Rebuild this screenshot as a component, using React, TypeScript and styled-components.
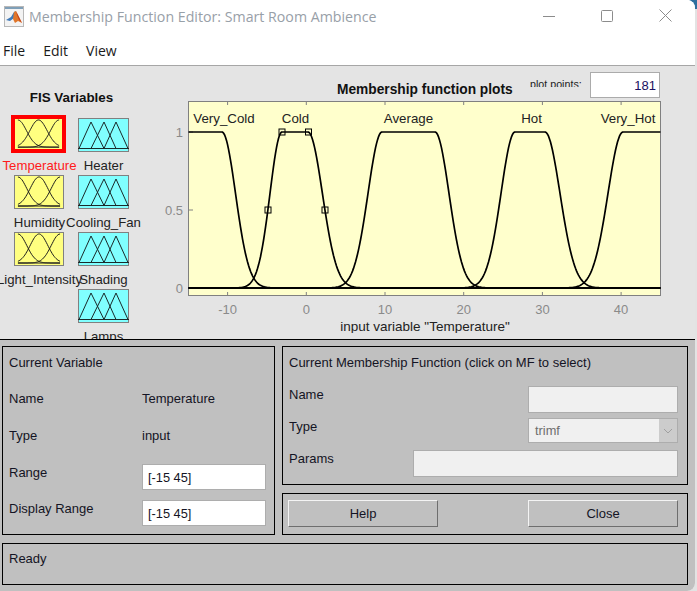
import React from "react";
import styled, { createGlobalStyle } from "styled-components";

const Global = createGlobalStyle`
  html, body { margin: 0; padding: 0; background: #e3e3e3; overflow: hidden; }
  #root { width: 697px; height: 591px; position: relative; }
  * { box-sizing: border-box; }
`;

const Sans = `"Liberation Sans", Arial, sans-serif`;
const UI = `"Open Sans", "Noto Sans", sans-serif`;

const Page = styled.div`
  width: 697px;
  height: 591px;
  position: relative;
  font-family: ${Sans};
`;
const CornerPeek = styled.div`
  position: absolute;
  top: 0;
  right: 0;
  width: 8px;
  height: 9px;
  background: #2f6f9f;
`;
const Win = styled.div`
  position: relative;
  width: 695px;
  height: 591px;
  display: flex;
  flex-direction: column;
  border-top-right-radius: 8px;
  border-bottom-right-radius: 8px;
  overflow: hidden;
  background: #fff;
`;
const TitleBar = styled.div`
  height: 33px;
  display: flex;
  align-items: center;
  background: #fff;
  padding-left: 4px;
  flex: none;
`;
const TitleText = styled.div`
  font-family: ${UI};
  font-size: 14.2px;
  color: #98a0a8;
  margin-left: 5px;
  white-space: nowrap;
  flex: 1;
`;
const WinButton = styled.div`
  width: 58.5px;
  height: 33px;
  display: flex;
  align-items: center;
  justify-content: center;
  margin-top: -2px;
`;
const MenuBar = styled.div`
  height: 33px;
  flex: none;
  display: flex;
  align-items: center;
  gap: 18px;
  padding: 3px 0 0 3px;
  background: #fff;
  border-bottom: 1px solid #a6a6a6;
`;
const MenuItem = styled.span`
  font-family: ${UI};
  font-size: 14px;
  color: #1a1a1a;
`;
const Upper = styled.div`
  height: 273px;
  flex: none;
  display: flex;
  background: #e4e4e4;
  overflow: hidden;
`;
const VarPanel = styled.div`
  width: 160px;
  flex: none;
  padding-top: 24px;
`;
const VarHeading = styled.div`
  font-size: 13.4px;
  line-height: 16px;
  font-weight: 700;
  color: #111;
  text-align: center;
  width: 143px;
`;
const VarGrid = styled.div`
  margin-top: 12px;
  padding-left: 14px;
  display: grid;
  grid-template-columns: 51px 51px;
  column-gap: 13px;
  row-gap: 2px;
`;
const VarCell = styled.div`
  width: 51px;
  display: flex;
  flex-direction: column;
  align-items: center;
`;
const Tile = styled.div<{ $kind: "in" | "out"; $selected?: boolean }>`
  width: ${(p) => (p.$selected ? 49 : p.$kind === "in" ? 50 : 51)}px;
  height: ${(p) => (p.$selected ? 32 : 34)}px;
  margin-bottom: ${(p) => (p.$selected ? 2 : 0)}px;
  flex: none;
  align-self: flex-start;
  background: ${(p) => (p.$kind === "in" ? "#ffff80" : "#80ffff")};
  border: 1px solid ${(p) => (p.$selected ? "#ff0000" : "#808080")};
  box-shadow: ${(p) => (p.$selected ? "0 0 0 3px #ff0000" : "none")};
  svg { display: block; width: 100%; height: 100%; overflow: visible; }
`;
const VarLabel = styled.div<{ $selected?: boolean }>`
  margin-top: 7px;
  font-size: 13.2px;
  line-height: 14px;
  white-space: nowrap;
  color: ${(p) => (p.$selected ? "#ff1a1a" : "#222")};
`;
const PlotColumn = styled.div`
  flex: 1;
  padding-top: 6px;
  min-width: 0;
`;
const PlotHeader = styled.div`
  height: 26px;
  display: flex;
  align-items: flex-end;
`;
const PlotTitle = styled.div`
  margin-left: 177px;
  font-size: 13.75px;
  line-height: 16px;
  font-weight: 700;
  color: #111;
  white-space: nowrap;
  width: 193px;
`;
const PointsLabel = styled.div`
  align-self: flex-start;
  margin-top: 7px;
  height: 8px;
  line-height: 11px;
  font-size: 10.7px;
  overflow: hidden;
  white-space: nowrap;
  color: #222;
  width: 60px;
`;
const PointsField = styled.div`
  width: 70px;
  height: 26px;
  background: #fff;
  border: 1px solid #ababab;
  font-size: 13px;
  line-height: 25px;
  text-align: right;
  padding-right: 3px;
  color: #1a1060;
`;
const PlotSvg = styled.svg`
  display: block;
  margin-top: 3px;
  font-family: ${Sans};
`;
const Lower = styled.div`
  flex: 1;
  background: #c0c0c0;
  border-top: 1px solid #000;
  padding: 6px 7px 7px 2px;
  display: grid;
  grid-template-columns: 273px 406px;
  grid-template-rows: 139px 42px 42px;
  column-gap: 7px;
  row-gap: 8px;
  font-size: 13px;
  color: #141424;
`;
const Group = styled.div<{ $area: string }>`
  grid-area: ${(p) => p.$area};
  border: 1px solid #000;
  min-width: 0;
`;
const VarGroup = styled(Group)`
  padding: 6px 6px;
  display: grid;
  grid-template-columns: 133px 124px;
  grid-template-rows: 27px 36px 37px 37px 36px;
`;
const Line = styled.div`
  line-height: 20px;
  padding-top: 2px;
  white-space: nowrap;
  align-self: center;
`;
const Heading = styled(Line)`
  grid-column: 1 / -1;
  align-self: start;
  padding-top: 0;
`;
const ValueField = styled.div`
  height: 26px;
  align-self: end;
  background: #fff;
  border: 1px solid #adadad;
  line-height: 26px;
  padding-left: 5px;
  font-size: 12.8px;
`;
const MfGroup = styled(Group)`
  padding: 6px 9px 0 6px;
  display: flex;
  flex-direction: column;
`;
const MfRow = styled.div<{ $h: number }>`
  display: flex;
  justify-content: space-between;
  align-items: flex-start;
  height: ${(p) => p.$h}px;
`;
const MfHeading = styled.div`
  line-height: 20px;
  white-space: nowrap;
`;
const MfLabel = styled.div`
  line-height: 20px;
  white-space: nowrap;
  margin-top: -1px;
`;
const EmptyField = styled.div<{ $w: number; $h?: number }>`
  width: ${(p) => p.$w}px;
  height: ${(p) => p.$h ?? 27}px;
  background: #f0f0f0;
  border: 1px solid #adadad;
`;
const SelectField = styled.div`
  width: 150px;
  height: 25px;
  background: #f0f0f0;
  border: 1px solid #adadad;
  display: flex;
  align-items: center;
  justify-content: space-between;
  padding-left: 6px;
  color: #6d6d6d;
  font-size: 12.8px;
`;
const SelectArrow = styled.div`
  width: 18px;
  height: 100%;
  background: #cccccc;
  display: flex;
  align-items: center;
  justify-content: center;
`;
const ButtonGroup = styled(Group)`
  padding: 6px 9px 0 5px;
  display: flex;
  justify-content: space-between;
`;
const Bevel = styled.div`
  width: 150px;
  height: 27px;
  background: #c0c0c0;
  border-top: 1px solid #f4f4f4;
  border-left: 1px solid #f4f4f4;
  border-right: 1px solid #6e6e6e;
  border-bottom: 1px solid #6e6e6e;
  display: flex;
  align-items: center;
  justify-content: center;
`;
const StatusGroup = styled(Group)`
  grid-column: 1 / -1;
  padding: 5px 6px;
  line-height: 20px;
`;

const gauss = (x: number, c: number, s: number) => Math.exp(-((x - c) ** 2) / (2 * s * s));
const X0 = 188.5;
const X1 = 660.5;
const Y1 = 132;
const Y0 = 288;

function gauss2Path(l: number, r: number, sl: number, sr: number, fromX = X0, toX = X1) {
  const pts: string[] = [];
  for (let x = fromX; x <= toX + 0.01; x += 1) {
    const m = x < l ? gauss(x, l, sl) : x > r ? gauss(x, r, sr) : 1;
    pts.push(`${x.toFixed(1)},${(Y0 - m * (Y0 - Y1)).toFixed(1)}`);
  }
  return "M" + pts.join("L");
}

const curves = [
  gauss2Path(-500, 222, 1, 13.5),
  gauss2Path(282, 308, 12, 14.4),
  gauss2Path(382, 435, 14, 14),
  gauss2Path(515, 545, 14, 15),
  gauss2Path(623, 2000, 15, 1),
];

const xTicks = [
  { x: 227.6, t: "-10" },
  { x: 306.3, t: "0" },
  { x: 385, t: "10" },
  { x: 463.7, t: "20" },
  { x: 542.4, t: "30" },
  { x: 621.1, t: "40" },
];
const yTicks = [
  { y: 132, t: "1" },
  { y: 210, t: "0.5" },
  { y: 288, t: "0" },
];
const mfLabels = [
  { x: 224, t: "Very_Cold" },
  { x: 295.5, t: "Cold" },
  { x: 408.5, t: "Average" },
  { x: 531.5, t: "Hot" },
  { x: 628, t: "Very_Hot" },
];
const handles: [number, number][] = [
  [282, 132],
  [308.5, 132],
  [268, 210],
  [325, 210],
];

function MembershipPlot() {
  return (
    <PlotSvg width={505} height={232} viewBox="160 101 505 232">
      <rect x={188.5} y={101.5} width={472} height={194} fill="#ffffcc" stroke="#808080" />
      {xTicks.map((k) => (
        <g key={k.t}>
          <path d={`M${k.x} 102V105M${k.x} 295V292`} stroke="#808080" />
          <text x={k.x} y={314} fontSize={13} fill="#8a8a8a" textAnchor="middle">
            {k.t}
          </text>
        </g>
      ))}
      {yTicks.map((k) => (
        <g key={k.t}>
          <path d={`M189 ${k.y}H193`} stroke="#808080" />
          <text x={183} y={k.y + 4.5} fontSize={13} fill="#8a8a8a" textAnchor="end">
            {k.t}
          </text>
        </g>
      ))}
      {curves.map((d, i) => (
        <path key={i} d={d} fill="none" stroke="#000" strokeWidth={1.7} />
      ))}
      {handles.map(([x, y]) => (
        <rect key={`${x}-${y}`} x={x - 3} y={y - 3} width={6} height={6} fill="none" stroke="#000" strokeWidth={1} />
      ))}
      {mfLabels.map((k) => (
        <text key={k.t} x={k.x} y={123} fontSize={13.3} fill="#222" textAnchor="middle">
          {k.t}
        </text>
      ))}
      <text x={425} y={331} fontSize={13.5} fill="#222" textAnchor="middle">
        input variable "Temperature"
      </text>
    </PlotSvg>
  );
}

function bellPath(c: number, s: number) {
  const pts: string[] = [];
  for (let x = 3; x <= 46; x += 1) {
    const m = gauss(x, c, s);
    pts.push(`${x},${(30 - m * 29).toFixed(1)}`);
  }
  return "M" + pts.join("L");
}

function InputGlyph() {
  return (
    <svg viewBox="0 0 49 32" preserveAspectRatio="none">
      <path d={bellPath(3, 9)} fill="none" stroke="#1a1a1a" strokeWidth={1} />
      <path d={bellPath(24.5, 9)} fill="none" stroke="#1a1a1a" strokeWidth={1} />
      <path d={bellPath(46, 9)} fill="none" stroke="#1a1a1a" strokeWidth={1} />
      <path d="M3 30H46" stroke="#1a1a1a" strokeWidth={1} />
    </svg>
  );
}

function OutputGlyph() {
  return (
    <svg viewBox="0 0 49 32" preserveAspectRatio="none">
      <path
        d="M0 29.5L12 3L25 29.5M12 29.5L25 3L37 29.5M25 29.5L37 3L49 29.5M-1 29.5H50"
        fill="none"
        stroke="#1a2a2a"
        strokeWidth={1}
        strokeLinejoin="round"
      />
    </svg>
  );
}

const MatlabIcon = () => (
  <svg width={20} height={21} viewBox="0 0 20 21">
    <rect x={0.5} y={0.5} width={19} height={20} fill="#f3f3f3" stroke="#b8b8b8" />
    <rect x={1} y={1} width={18} height={2} fill="#7f9fb8" />
    <path d="M2 14L7 11L10 6L12 5L10 12L6 15Z" fill="#3f79b8" />
    <path d="M10 6L12 5L15 11L18 17L14 15L11 17L9 13Z" fill="#e0762a" />
    <path d="M12 5L15 11L18 17L15 14L13 9Z" fill="#c2401c" />
  </svg>
);

const variables = [
  { name: "Temperature", kind: "in" as const, selected: true },
  { name: "Heater", kind: "out" as const },
  { name: "Humidity", kind: "in" as const },
  { name: "Cooling_Fan", kind: "out" as const },
  { name: "Light_Intensity", kind: "in" as const },
  { name: "Shading", kind: "out" as const },
  { name: "", kind: "none" as const },
  { name: "Lamps", kind: "out" as const },
];

export default function App() {
  return (
    <>
      <Global />
      <Page>
        <CornerPeek />
        <Win>
          <TitleBar>
            <MatlabIcon />
            <TitleText>Membership Function Editor: Smart Room Ambience</TitleText>
            <WinButton>
              <svg width={12} height={12} viewBox="0 0 12 12">
                <path d="M0 6.5H12" stroke="#8c8c8c" />
              </svg>
            </WinButton>
            <WinButton>
              <svg width={12} height={12} viewBox="0 0 12 12">
                <rect x={0.5} y={0.5} width={11} height={11} rx={1} fill="none" stroke="#8c8c8c" />
              </svg>
            </WinButton>
            <WinButton>
              <svg width={13} height={13} viewBox="0 0 13 13">
                <path d="M0.5 0.5L12.5 12.5M12.5 0.5L0.5 12.5" stroke="#8c8c8c" />
              </svg>
            </WinButton>
          </TitleBar>
          <MenuBar>
            <MenuItem>File</MenuItem>
            <MenuItem>Edit</MenuItem>
            <MenuItem>View</MenuItem>
          </MenuBar>
          <Upper>
            <VarPanel>
              <VarHeading>FIS Variables</VarHeading>
              <VarGrid>
                {variables.map((v, i) => (
                  <VarCell key={i}>
                    {v.kind !== "none" && (
                      <>
                        <Tile $kind={v.kind} $selected={v.selected}>
                          {v.kind === "in" ? <InputGlyph /> : <OutputGlyph />}
                        </Tile>
                        <VarLabel $selected={v.selected}>{v.name}</VarLabel>
                      </>
                    )}
                  </VarCell>
                ))}
              </VarGrid>
            </VarPanel>
            <PlotColumn>
              <PlotHeader>
                <PlotTitle>Membership function plots</PlotTitle>
                <PointsLabel>plot points:</PointsLabel>
                <PointsField>181</PointsField>
              </PlotHeader>
              <MembershipPlot />
            </PlotColumn>
          </Upper>
          <Lower>
            <VarGroup $area="1 / 1 / 3 / 2">
              <Heading>Current Variable</Heading>
              <Line>Name</Line>
              <Line>Temperature</Line>
              <Line>Type</Line>
              <Line>input</Line>
              <Line>Range</Line>
              <ValueField>[-15 45]</ValueField>
              <Line>Display Range</Line>
              <ValueField>[-15 45]</ValueField>
            </VarGroup>
            <MfGroup $area="1 / 2 / 2 / 3">
              <MfRow $h={33}>
                <MfHeading>Current Membership Function (click on MF to select)</MfHeading>
              </MfRow>
              <MfRow $h={32}>
                <MfLabel>Name</MfLabel>
                <EmptyField $w={150} />
              </MfRow>
              <MfRow $h={32}>
                <MfLabel>Type</MfLabel>
                <SelectField>
                  trimf
                  <SelectArrow>
                    <svg width={10} height={6} viewBox="0 0 10 6">
                      <path d="M1 1L5 5L9 1" fill="none" stroke="#a0a0a0" />
                    </svg>
                  </SelectArrow>
                </SelectField>
              </MfRow>
              <MfRow $h={32}>
                <MfLabel>Params</MfLabel>
                <EmptyField $w={265} />
              </MfRow>
            </MfGroup>
            <ButtonGroup $area="2 / 2 / 3 / 3">
              <Bevel>Help</Bevel>
              <Bevel>Close</Bevel>
            </ButtonGroup>
            <StatusGroup $area="3 / 1 / 4 / 3">Ready</StatusGroup>
          </Lower>
        </Win>
      </Page>
    </>
  );
}
